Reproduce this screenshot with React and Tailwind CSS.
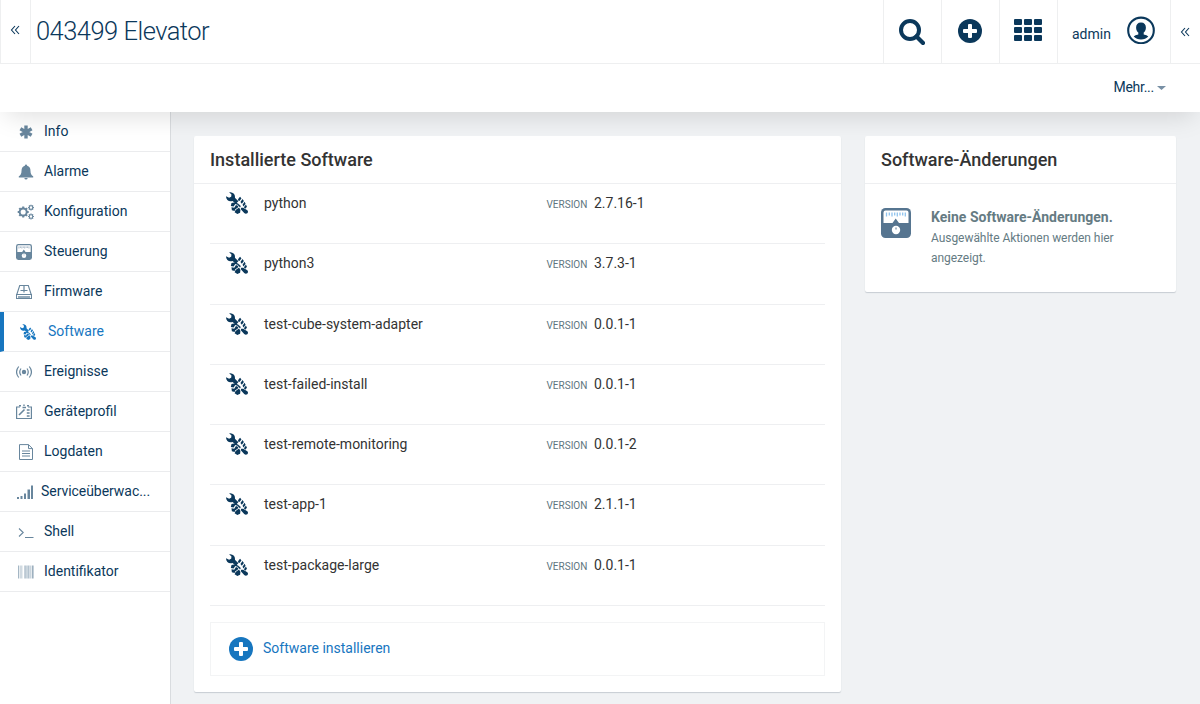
import React from "react";

function Tools({ className }) {
  return (
    <svg viewBox="0 0 64 64" className={className} fill="currentColor">
      <path d="M9 1Q17-1 23 5Q27 10 26 17L36 27L29 34L19 26Q10 29 4 23Q0 18 0 12L9 17L15 14L16 7Z" />
      <path d="M37 18L41 14L45 19L39 26L34 24ZM42 29L48 20L52 26L46 34ZM48 37L54 28L57 34L51 42ZM52 44L58 36L61 43L56 49Z" />
      <path d="M16 32L27 30L36 34L35 38L27 35L22 42L14 41ZM16 44L24 46L29 38L36 41L34 46L27 50L25 55L17 53ZM36 34L43 41L41 45L35 39Z" />
      <path d="M28 52L38 45L42 52L41 60L33 64L25 59ZM44 46L50 46L62 53Q66 58 62 62Q57 65 53 61L43 50Z" />
    </svg>
  );
}

function Control({ className, tick }) {
  return (
    <svg viewBox="0 0 30 30" className={className}>
      <rect width="30" height="30" rx="4.500" fill="currentColor" />
      <path d="M2.500 4.500a2 2 0 0 1 2-2h21a2 2 0 0 1 2 2V15H18l-3.300-4.500L11.500 15h-9z" fill="#fff" />
      <path d="M5.500 4.500v4M8.300 4.500v3M11 4.500v4M13.700 4.500v3M16.300 4.500v4M19 4.500v3M21.700 4.500v3M24.300 4.500v4" stroke={tick} strokeWidth="1.300" />
      <circle cx="15" cy="22" r="4.200" fill="#fff" />
      <path d="M15 19.500v2" stroke="currentColor" strokeWidth="1" />
    </svg>
  );
}

function Plus({ className }) {
  return (
    <svg viewBox="0 0 24 24" className={className}>
      <circle cx="12" cy="12" r="12" fill="currentColor" />
      <path d="M10 6q0-1 1-1h2q1 0 1 1v4h4q1 0 1 1v2q0 1-1 1h-4v4q0 1-1 1h-2q-1 0-1-1v-4H6q-1 0-1-1v-2q0-1 1-1h4z" fill="#fff" />
    </svg>
  );
}

function Chevrons() {
  return (
    <svg viewBox="0 0 10 10" className="size-[10px] text-[#0b385b]" fill="none" stroke="currentColor" strokeWidth="1.100">
      <path d="M5 1L1.500 5L5 9M9 1L5.500 5L9 9" />
    </svg>
  );
}

function Gear({ cx, cy, r, w, teeth }) {
  return (
    <g fill="none" stroke="currentColor">
      <circle cx={cx} cy={cy} r={r} strokeWidth={w} />
      {Array.from({ length: teeth }, (_, i) => (
        <path key={i} d={`M${cx} ${cy - r}v${-w * 1.05}`} strokeWidth={w * 1.1} transform={`rotate(${(i * 360) / teeth} ${cx} ${cy})`} />
      ))}
    </g>
  );
}

const box = "block size-4 shrink-0";

const icons = {
  info: (
    <svg viewBox="0 0 16 16" className={box} stroke="currentColor" strokeWidth="3.400">
      <path d="M8 1.500v13M2.400 4.700l11.200 6.600M13.600 4.700L2.400 11.300" />
    </svg>
  ),
  bell: (
    <svg viewBox="0 0 16 16" className={box} fill="currentColor">
      <path d="M8 .5q1 0 1.200 1.200Q12.500 2.600 12.500 7q0 4 2.700 5.200v1.300H.8v-1.300Q3.500 11 3.500 7q0-4.400 3.300-5.300Q7 .5 8 .5zM6.300 14h3.400q-.3 1.600-1.700 1.600T6.300 14z" />
    </svg>
  ),
  gears: (
    <svg viewBox="0 0 18 16" className="block h-4 w-[18px] shrink-0">
      <Gear cx={6.2} cy={8} r={3.5} w={1.9} teeth={8} />
      <Gear cx={14} cy={3.6} r={1.8} w={1.1} teeth={8} />
      <Gear cx={14} cy={12.5} r={1.8} w={1.1} teeth={8} />
    </svg>
  ),
  control: <Control className={box} tick="#8aa0b3" />,
  firmware: (
    <svg viewBox="0 0 16 16" className={box} fill="none" stroke="currentColor">
      <path d="M.8 10.500L3.700 1.500h8.600l2.900 9" strokeWidth="1.100" />
      <path d="M.5 10.500h15v4H.5z" strokeWidth="1.100" />
      <path d="M2 13h12" strokeWidth="1.400" />
      <path d="M8 2v6.500M4.500 6.500h7" strokeWidth="1.200" />
    </svg>
  ),
  software: <Tools className={box} />,
  events: (
    <svg viewBox="0 0 16 16" className={box} fill="none" stroke="currentColor" strokeWidth="1.200">
      <circle cx="8" cy="8" r="2.200" fill="currentColor" stroke="none" />
      <path d="M5 4.500q-2.500 3.500 0 7M11 4.500q2.500 3.500 0 7M2.700 2.500q-4.300 5.500 0 11M13.300 2.500q4.300 5.500 0 11" />
    </svg>
  ),
  profile: (
    <svg viewBox="0 0 16 16" className={box} fill="none" stroke="currentColor">
      <path d="M4 3H.6v11.500h14.800V3H12" strokeWidth="1.200" />
      <path d="M6.500 3.500h3.500M3 1.800h2M11 1.800h2M8 .5v1.500" strokeWidth="1.400" />
      <path d="M3 11l2.500-2.500L8.500 5.500" strokeWidth="1.600" />
      <path d="M10.800 6h2.800M10.800 9h2.800M10.800 12h2.800" strokeWidth="1.500" />
    </svg>
  ),
  log: (
    <svg viewBox="0 0 16 16" className={box} fill="none" stroke="currentColor" strokeWidth="1">
      <path d="M1.500.6h9l4 4v10.900h-13zM10.500.6v4h4M4 7h8M4 9.500h8M4 12h8" />
    </svg>
  ),
  service: (
    <svg viewBox="0 0 16 16" className={box} fill="currentColor">
      <path d="M0 13h2v2H0zM3.500 12h2v3h-2zM7 9.500h2V15H7zM10.500 5.500h2.500V15h-2.500zM14 1.500h2.300V15H14z" />
    </svg>
  ),
  shell: (
    <svg viewBox="0 0 16 16" className={box} fill="none" stroke="currentColor" strokeWidth="1.100">
      <path d="M1 4.500l4.200 4L1 12.500M7 13.500h8.500" />
    </svg>
  ),
  barcode: (
    <svg viewBox="0 0 16 16" className={box} stroke="currentColor" fill="none">
      <path d="M.5 1.500v13" opacity=".6" />
      <path d="M3 1.500v13" opacity=".3" strokeWidth="3" />
      <path d="M7 1.500v13M10.500 1.500v13" opacity=".5" strokeWidth="1.500" />
      <path d="M8.700 1.500v13M12.500 1.500v13" opacity=".35" strokeWidth="2" />
      <path d="M14.800 1.500v13" opacity=".65" strokeWidth="1.600" />
    </svg>
  ),
};

const nav = [
  ["info", "Info", "pl-[18px] gap-[10px]"],
  ["bell", "Alarme", "pl-[18px] gap-[10px]"],
  ["gears", "Konfiguration", "pl-[17px] gap-[9px]"],
  ["control", "Steuerung", "pl-4 gap-3"],
  ["firmware", "Firmware", "pl-4 gap-3"],
  ["software", "Software", "pl-4 gap-3"],
  ["events", "Ereignisse", "pl-4 gap-3"],
  ["profile", "Geräteprofil", "pl-4 gap-3"],
  ["log", "Logdaten", "pl-[18px] gap-[10px]"],
  ["service", "Serviceüberwac...", "pl-[17px] gap-[8px] tracking-[-0.050px]"],
  ["shell", "Shell", "pl-[18px] gap-[10px]"],
  ["barcode", "Identifikator", "pl-[18px] gap-[10px]"],
];

const packages = [
  ["python", "2.7.16-1"],
  ["python3", "3.7.3-1"],
  ["test-cube-system-adapter", "0.0.1-1"],
  ["test-failed-install", "0.0.1-1"],
  ["test-remote-monitoring", "0.0.1-2"],
  ["test-app-1", "2.1.1-1"],
  ["test-package-large", "0.0.1-1"],
];

function Header() {
  return (
    <header className="relative z-10 h-28 shrink-0 bg-white shadow-[0_10px_24px_-6px_rgba(0,0,0,0.13)]">
      <div className="flex h-16 border-b border-[#eeeff0] text-[#0b385b]">
        <div className="flex w-[31px] shrink-0 items-center justify-center border-x border-[#eeeff0] pr-[2px] pb-[3px]">
          <Chevrons />
        </div>
        <h1 className="grow pl-[5px] pt-[11px] text-[25.500px] leading-10 font-light tracking-[-0.520px]">043499 Elevator</h1>
        <div className="flex w-[58px] items-center justify-center border-l border-[#eeeff0] pr-[2px]">
          <svg viewBox="0 0 26 26" className="size-[26px]" fill="none" stroke="currentColor">
            <circle cx="11" cy="11" r="9" strokeWidth="4" />
            <path d="M17.500 17.500l6.500 6.500" strokeWidth="4.200" strokeLinecap="round" />
          </svg>
        </div>
        <div className="flex w-[58px] items-center justify-center border-l border-[#eeeff0] pr-[2px] pb-px">
          <Plus className="size-6" />
        </div>
        <div className="flex w-[58px] items-center justify-center border-l border-[#eeeff0] pr-[2px] pb-[3px]">
          <div className="grid grid-cols-3 gap-[2px]">
            {Array.from({ length: 9 }, (_, i) => (
              <span key={i} className="h-[6px] w-2 rounded-[1px] bg-[#0b385b]" />
            ))}
          </div>
        </div>
        <div className="flex w-[113px] border-l border-[#eeeff0] pl-[14px]">
          <span className="w-[55px] pt-6 text-sm leading-5">admin</span>
          <svg viewBox="0 0 28 28" className="mt-4 size-7">
            <circle cx="14" cy="14.400" r="12.800" fill="none" stroke="currentColor" strokeWidth="2.100" />
            <path d="M14 6.400c3.300 0 4.900 2 4.900 5 0 2.300-.9 4.200-2.200 5.200v2q3.300.7 4.600 2Q18.500 23.600 14 23.600T6.700 20.600q1.300-1.300 4.600-2v-2C10 15.600 9.100 13.700 9.100 11.400c0-3 1.600-5 4.900-5z" fill="currentColor" />
          </svg>
        </div>
        <div className="flex w-[30px] items-center justify-center border-l border-[#eeeff0] pr-[2px]">
          <Chevrons />
        </div>
      </div>
      <div className="flex h-12 items-center justify-end gap-[3px] pr-[34px] text-sm text-[#0b385b]">
        <span className="pb-[2px] tracking-[-0.250px]">Mehr...</span>
        <svg viewBox="0 0 9 4" className="h-1 w-[9px]" fill="#7890a5"><path d="M0 0h9L4.500 4z" /></svg>
      </div>
    </header>
  );
}

function Sidebar() {
  return (
    <nav className="w-[171px] shrink-0 border-r border-[#d9dcdf] bg-white">
      {nav.map(([icon, label, pad]) => {
        const active = icon === "software";
        return (
          <div
            key={icon}
            className={`flex h-10 items-center border-b border-[#ebecee] pb-[2px] text-sm ${pad} ${
              active ? "border-l-4 border-l-[#1776bf] text-[#1776bf]" : "text-[#0b385b]"
            }`}
          >
            <span className={active ? "pt-[2px]" : "pt-[2px] text-[#68869d]"}>{icons[icon]}</span>
            <span className="whitespace-nowrap">{label}</span>
          </div>
        );
      })}
    </nav>
  );
}

const card = "rounded-[2px] bg-white shadow-[0_1px_1px_rgba(40,60,80,0.2)]";
const cardTitle = "h-12 border-b border-[#eeeff1] px-4 text-lg leading-[47px] font-medium text-[#333]";

export default function App() {
  return (
    <div className="flex h-[704px] w-[1200px] flex-col overflow-hidden bg-[#f0f2f4] font-['Roboto',sans-serif]">
      <Header />
      <div className="flex grow">
        <Sidebar />
        <main className="flex grow items-start gap-6 pt-6 pl-[23px]">
          <section className={`h-[556px] w-[647px] ${card}`}>
            <h2 className={cardTitle}>Installierte Software</h2>
            <div className="px-4">
              {packages.map(([name, version]) => (
                <div key={name} className="flex h-[60.250px] border-b border-[#eeeff1] pt-[9px] pl-4 text-sm leading-5 text-[#333]">
                  <Tools className="-mt-px size-[22px] shrink-0 text-[#0b385b]" />
                  <span className="ml-4 w-[282.500px] shrink-0">{name}</span>
                  <span className="w-[47.500px] shrink-0 pt-[2px] text-[10px] text-[#607580]">VERSION</span>
                  <span>{version}</span>
                </div>
              ))}
              <button className="mt-4 flex h-[54px] w-full items-center gap-[10px] border border-[#f3f4f5] pl-[18px] text-sm text-[#1776bf]">
                <Plus className="size-6" />
                <span className="pb-px">Software installieren</span>
              </button>
            </div>
          </section>
          <section className={`h-[156px] w-[311px] ${card}`}>
            <h2 className={cardTitle}>Software-Änderungen</h2>
            <div className="flex gap-5 px-4 pt-[23px]">
              <Control className="mt-px size-[30px] shrink-0 text-[#567590]" tick="#8fc3ee" />
              <div className="text-[#657b83]">
                <p className="text-sm leading-5 font-bold">Keine Software-Änderungen.</p>
                <p className="w-[200px] pt-px text-xs leading-5 tracking-[-0.050px]">Ausgewählte Aktionen werden hier angezeigt.</p>
              </div>
            </div>
          </section>
        </main>
      </div>
    </div>
  );
}
